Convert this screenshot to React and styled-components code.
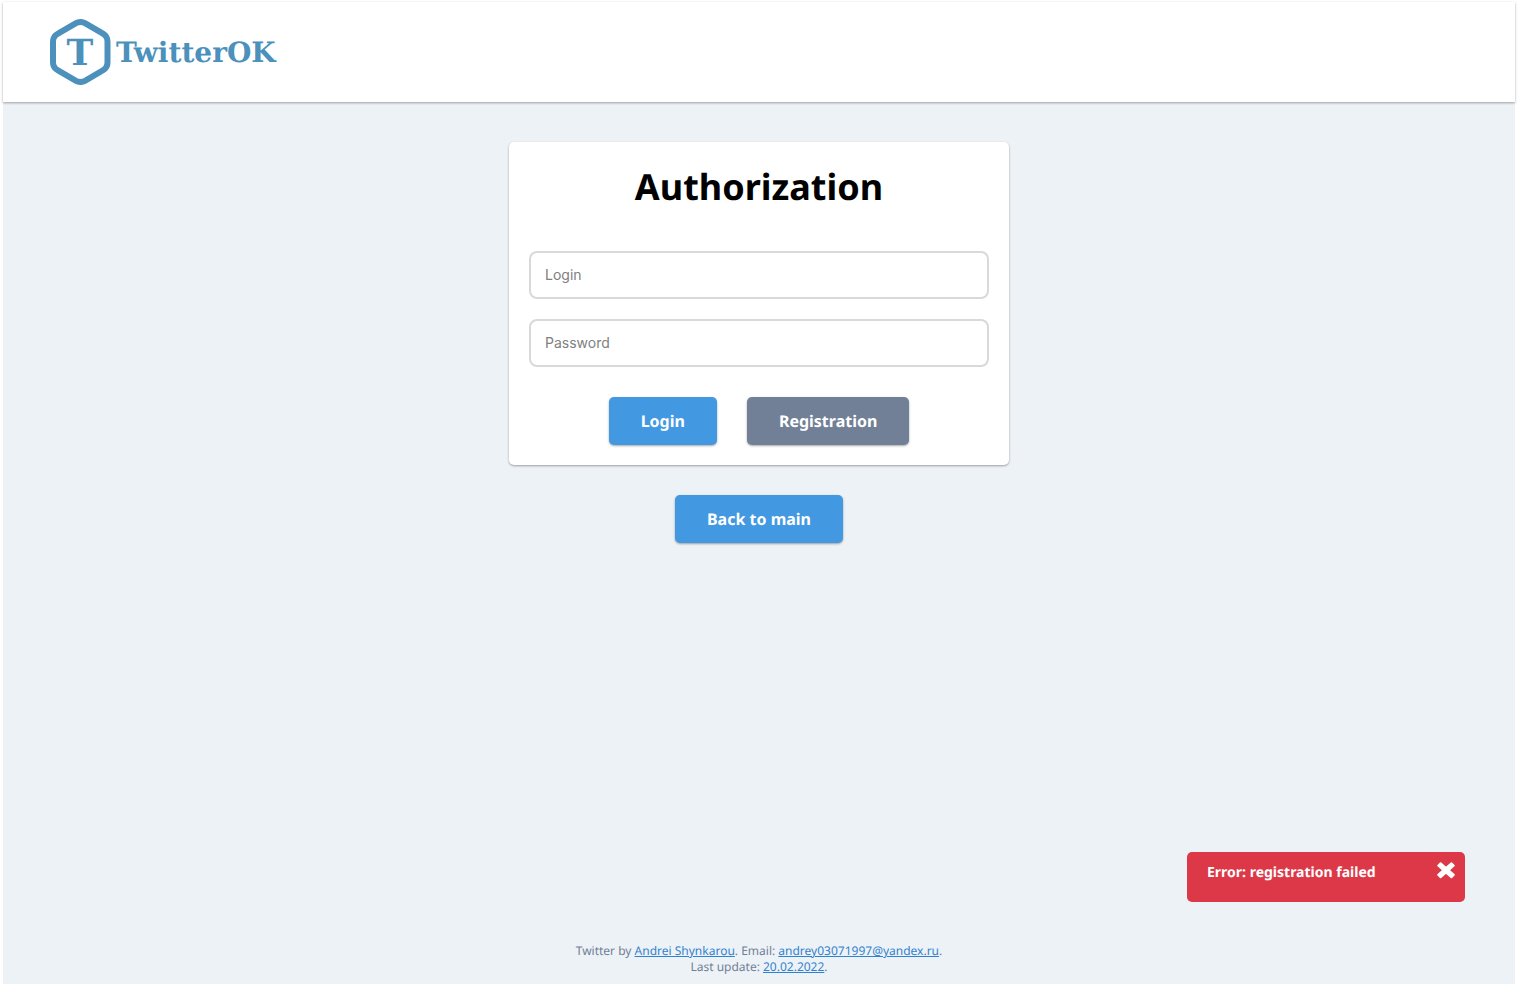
import React from 'react';
import styled, { createGlobalStyle } from 'styled-components';

const GlobalStyle = createGlobalStyle`
  *, *::before, *::after { box-sizing: border-box; }
  body {
    margin: 0;
    background: #ffffff;
    font-family: 'Noto Sans', sans-serif;
    text-rendering: geometricPrecision;
  }
`;

const shadow = '0 1px 3px rgba(0, 0, 0, 0.12), 0 1px 2px rgba(0, 0, 0, 0.24)';

const Page = styled.div`
  display: flex;
  flex-direction: column;
  min-height: 100vh;
  border: 3px solid #ffffff;
  border-width: 2px 3px 0;
  background: #edf2f7;
`;

const Header = styled.header`
  display: flex;
  align-items: center;
  height: 100px;
  padding: 0 47px;
  background: #ffffff;
  box-shadow: ${shadow};
`;

const Logo = styled.a`
  display: flex;
  align-items: center;
  gap: 4px;
  color: #4b91bb;
  text-decoration: none;
`;

const Wordmark = styled.span`
  padding-top: 2px;
  font: bold 28px/36px 'DejaVu Serif', serif;
`;

const Main = styled.main`
  display: flex;
  flex: 1;
  flex-direction: column;
  align-items: center;
  gap: 30px;
  padding: 40px 20px;
`;

const Card = styled.form`
  display: flex;
  flex-direction: column;
  width: 100%;
  max-width: 500px;
  padding: 20px;
  border-radius: 5px;
  background: #ffffff;
  box-shadow: ${shadow};
`;

const Title = styled.h1`
  margin: 0 0 40px;
  color: #000000;
  font-size: 36px;
  font-weight: 700;
  line-height: 49px;
  text-align: center;
`;

const Fields = styled.div`
  display: flex;
  flex-direction: column;
  gap: 20px;
`;

const Field = styled.input`
  width: 100%;
  height: 48px;
  padding: 0 14px 2px;
  border: 2px solid #d9d9d9;
  border-radius: 8px;
  background: #ffffff;
  color: #222222;
  font: 14px/20px Inter, sans-serif;

  &::placeholder {
    color: #808080;
    opacity: 1;
  }
`;

const Actions = styled.div`
  display: flex;
  flex-wrap: wrap;
  justify-content: center;
  gap: 30px;
  margin-top: 30px;
`;

const Button = styled.button`
  height: 48px;
  padding: 0 32px;
  border: 0;
  border-radius: 5px;
  background: ${({ $secondary }) => ($secondary ? '#718096' : '#4299e1')};
  color: #ffffff;
  font: 700 16px/24px 'Noto Sans', sans-serif;
  text-rendering: inherit;
  box-shadow: ${shadow};
  cursor: pointer;
`;

const Footer = styled.footer`
  padding: 0 20px 9px;
  color: #718096;
  font-size: 12px;
  line-height: 16px;
  text-align: center;

  p { margin: 0; }
`;

const FooterLink = styled.a`
  color: #3182ce;
  text-decoration: underline;
`;

const Toast = styled.div`
  position: fixed;
  right: 53px;
  bottom: 82px;
  display: flex;
  align-items: flex-start;
  justify-content: space-between;
  width: 278px;
  height: 50px;
  padding: 10px 10px 10px 20px;
  border-radius: 5px;
  background: #dc3848;
  color: #ffffff;
  font-size: 14px;
  font-weight: 700;
  line-height: 22px;
`;

const CloseButton = styled.button`
  display: flex;
  padding: 0;
  border: 0;
  background: none;
  color: inherit;
  cursor: pointer;
`;

function LogoMark() {
  return (
    <svg width="62" height="66" viewBox="0 0 62 66" aria-hidden="true">
      <path
        d="M26 4.2Q30.5 1.8 35 4.2L53 14.7Q57.5 17.4 57.5 22.5V43.5Q57.5 48.6 53 51.3L35 61.8Q30.5 64.2 26 61.8L8 51.3Q3 48.6 3 43.5V22.5Q3 17.4 8 14.7Z"
        fill="none"
        stroke="currentColor"
        strokeWidth="6"
      />
      <text
        x="30"
        y="46"
        fill="currentColor"
        fontFamily="'DejaVu Serif', serif"
        fontSize="36"
        fontWeight="bold"
        textAnchor="middle"
      >
        T
      </text>
    </svg>
  );
}

function CrossIcon() {
  return (
    <svg width="18" height="17" viewBox="0 0 18 17" aria-hidden="true">
      <path
        d="M3.6 1.2L9 6L14.4 1.2L16.8 3.6L11.6 8.2L16.8 12.8L14.4 15.2L9 10.4L3.6 15.2L1.2 12.8L6.4 8.2L1.2 3.6Z"
        fill="currentColor"
        stroke="currentColor"
        strokeWidth="2"
        strokeLinejoin="round"
      />
    </svg>
  );
}

export default function App() {
  return (
    <>
      <GlobalStyle />
      <Page>
        <Header>
          <Logo href="#">
            <LogoMark />
            <Wordmark>TwitterOK</Wordmark>
          </Logo>
        </Header>
        <Main>
          <Card onSubmit={(event) => event.preventDefault()}>
            <Title>Authorization</Title>
            <Fields>
              <Field type="text" placeholder="Login" aria-label="Login" />
              <Field type="password" placeholder="Password" aria-label="Password" />
            </Fields>
            <Actions>
              <Button type="submit">Login</Button>
              <Button type="button" $secondary>Registration</Button>
            </Actions>
          </Card>
          <Button type="button">Back to main</Button>
        </Main>
        <Footer>
          <p>
            Twitter by <FooterLink href="#">Andrei Shynkarou</FooterLink>. Email:{' '}
            <FooterLink href="mailto:andrey03071997@yandex.ru">andrey03071997@yandex.ru</FooterLink>.
          </p>
          <p>
            Last update: <FooterLink href="#">20.02.2022</FooterLink>.
          </p>
        </Footer>
      </Page>
      <Toast role="alert">
        <span>Error: registration failed</span>
        <CloseButton type="button" aria-label="Close">
          <CrossIcon />
        </CloseButton>
      </Toast>
    </>
  );
}
